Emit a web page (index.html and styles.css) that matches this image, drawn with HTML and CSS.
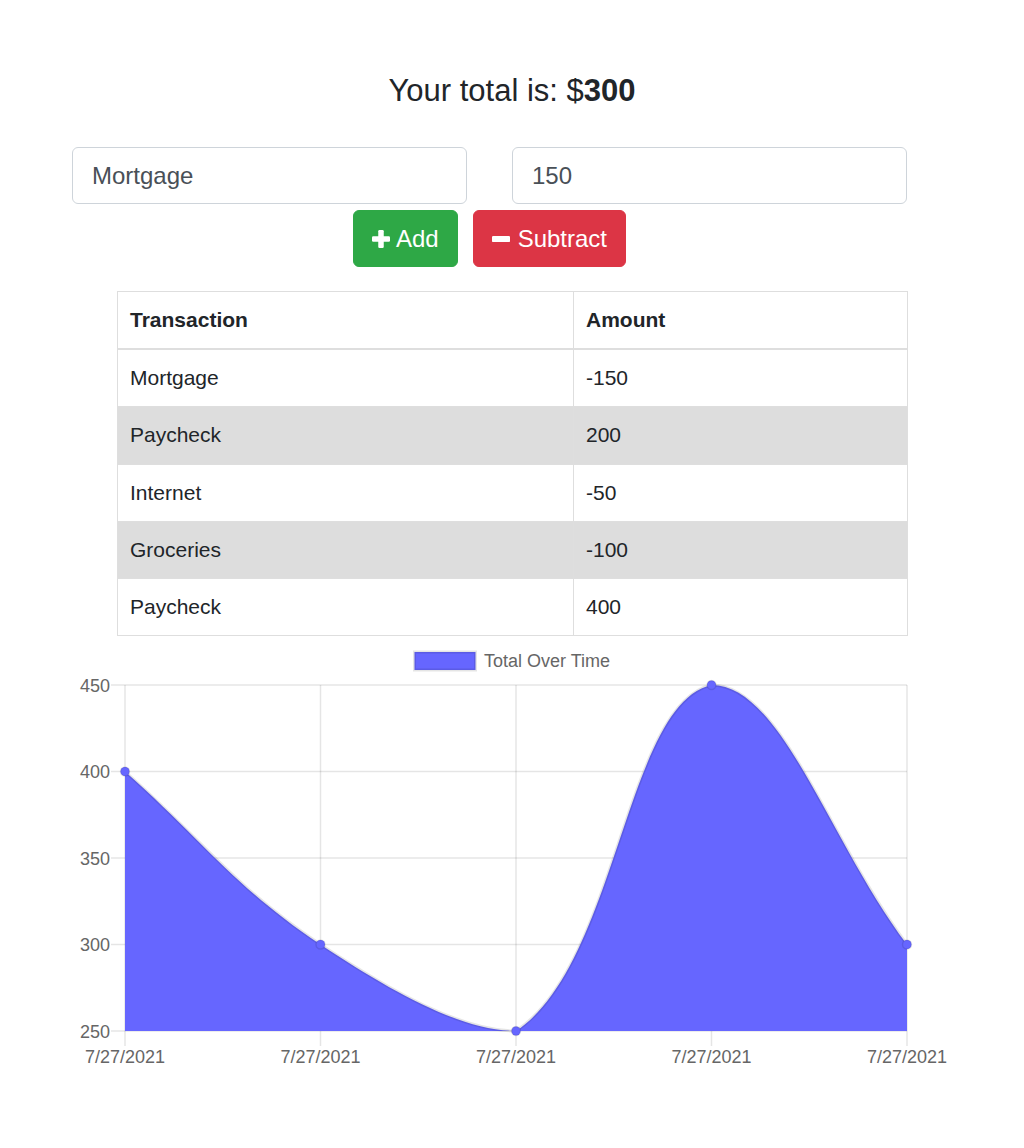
FILE: index.html
```html
<!DOCTYPE html>
<html lang="en">
<head>
<meta charset="utf-8">
<title>Budget Tracker</title>
<link rel="stylesheet" href="styles.css">
</head>
<body>
<h1 class="total">Your total is: $<span class="amount">300</span></h1>
<div class="form">
  <div class="inputs">
    <input class="field" type="text" value="Mortgage">
    <input class="field" type="text" value="150">
  </div>
  <div class="actions">
    <button class="btn btn-add"><svg class="icon" viewBox="0 0 18 18" width="18" height="18"><rect x="6.25" y="0" width="5.5" height="18" rx="1.2" fill="#fff"/><rect x="0" y="6.25" width="18" height="5.5" rx="1.2" fill="#fff"/></svg><span>Add</span></button>
    <button class="btn btn-sub"><svg class="icon" viewBox="0 0 18 18" width="18" height="18"><rect x="0" y="5.9" width="18" height="6.2" rx="1.2" fill="#fff"/></svg><span>Subtract</span></button>
  </div>
</div>
<table class="tx">
  <thead>
    <tr><th class="col-name">Transaction</th><th>Amount</th></tr>
  </thead>
  <tbody>
    <tr><td>Mortgage</td><td>-150</td></tr>
    <tr><td>Paycheck</td><td>200</td></tr>
    <tr><td>Internet</td><td>-50</td></tr>
    <tr><td>Groceries</td><td>-100</td></tr>
    <tr><td>Paycheck</td><td>400</td></tr>
  </tbody>
</table>
<svg class="chart" viewBox="0 636 1024 500" width="1024" height="500">
  <g class="legend">
    <rect x="414.5" y="652" width="61" height="18" fill="#6666ff" stroke="rgba(0,0,0,0.1)" stroke-width="3"/>
    <text x="484" y="667" class="lbl">Total Over Time</text>
  </g>
  <g stroke="rgba(0,0,0,0.1)" stroke-width="1.5" fill="none">
    <line x1="111" y1="685" x2="907" y2="685"/>
    <line x1="111" y1="771.5" x2="907" y2="771.5"/>
    <line x1="111" y1="858" x2="907" y2="858"/>
    <line x1="111" y1="944.5" x2="907" y2="944.5"/>
    <line x1="111" y1="1031" x2="907" y2="1031"/>
    <line x1="125" y1="685" x2="125" y2="1046"/>
    <line x1="320.5" y1="685" x2="320.5" y2="1046"/>
    <line x1="516" y1="685" x2="516" y2="1046"/>
    <line x1="711.5" y1="685" x2="711.5" y2="1046"/>
    <line x1="907" y1="685" x2="907" y2="1046"/>
  </g>
  <g class="lbl" text-anchor="end">
    <text x="110" y="691.5">450</text>
    <text x="110" y="778">400</text>
    <text x="110" y="864.5">350</text>
    <text x="110" y="951">300</text>
    <text x="110" y="1037.5">250</text>
  </g>
  <g class="lbl" text-anchor="middle">
    <text x="125" y="1063">7/27/2021</text>
    <text x="320.5" y="1063">7/27/2021</text>
    <text x="516" y="1063">7/27/2021</text>
    <text x="711.5" y="1063">7/27/2021</text>
    <text x="907" y="1063">7/27/2021</text>
  </g>
  <path d="M125,771.5 C203.2,840.7 234.52,887.43 320.5,944.5 C390.92,991.24 461.3,1031 516,1031 C617.7,963.5 625.44,704.04 711.5,685 C781.84,685 828.8,840.7 907,944.5 L907,1031 L125,1031 Z" fill="#6666ff"/>
  <path d="M125,771.5 C203.2,840.7 234.52,887.43 320.5,944.5 C390.92,991.24 461.3,1031 516,1031 C617.7,963.5 625.44,704.04 711.5,685 C781.84,685 828.8,840.7 907,944.5" fill="none" stroke="rgba(0,0,0,0.1)" stroke-width="3"/>
  <g fill="#6666ff" stroke="rgba(0,0,0,0.1)" stroke-width="1.5">
    <circle cx="125" cy="771.5" r="4.5"/>
    <circle cx="320.5" cy="944.5" r="4.5"/>
    <circle cx="516" cy="1031" r="4.5"/>
    <circle cx="711.5" cy="685" r="4.5"/>
    <circle cx="907" cy="944.5" r="4.5"/>
  </g>
</svg>
</body>
</html>
```
FILE: styles.css
```css
body {
  margin: 0;
  font-family: "Liberation Sans", Arial, sans-serif;
  color: #212529;
  background: #fff;
}

.total {
  margin: 0;
  padding-top: 72px;
  font-size: 31px;
  line-height: 37px;
  font-weight: 400;
  text-align: center;
}

.total .amount {
  font-weight: 700;
}

.form {
  width: 835px;
  margin: 38px 0 0 72px;
}

.inputs {
  display: flex;
  gap: 45px;
}

.field {
  width: 395px;
  height: 57px;
  box-sizing: border-box;
  border: 1px solid #ced4da;
  border-radius: 6px;
  padding: 0 18px 0 19px;
  font-family: "Liberation Sans", Arial, sans-serif;
  font-size: 24px;
  color: #495057;
  background: #fff;
  outline: none;
}

.actions {
  display: flex;
  justify-content: center;
  gap: 15px;
  margin-top: 6px;
}

.btn {
  display: inline-flex;
  align-items: center;
  gap: 6px;
  height: 57px;
  padding: 0 18px;
  border: 1px solid transparent;
  border-radius: 6px;
  font-family: "Liberation Sans", Arial, sans-serif;
  font-size: 24px;
  color: #fff;
  cursor: pointer;
}

.btn .icon {
  display: block;
  flex: none;
}

.btn-add {
  background: #2ea846;
  border-color: #2ea846;
}

.btn-sub {
  background: #dc3545;
  border-color: #dc3545;
  gap: 8px;
}

.tx {
  border-collapse: collapse;
  width: 791px;
  margin: 24px 0 0 117px;
  font-size: 21px;
}

.tx th,
.tx td {
  border: 1px solid #dedede;
  padding: 12px 12px 12px 12px;
  line-height: 32.2px;
  text-align: left;
}

.tx th {
  font-weight: 700;
  border-bottom-width: 2px;
}

.tx .col-name {
  width: 431px;
}

.tx tbody tr:nth-child(even) td {
  background: #dddddd;
}

.chart {
  display: block;
}

.lbl {
  font-family: "Liberation Sans", Arial, sans-serif;
  font-size: 18px;
  fill: #666;
}
```
